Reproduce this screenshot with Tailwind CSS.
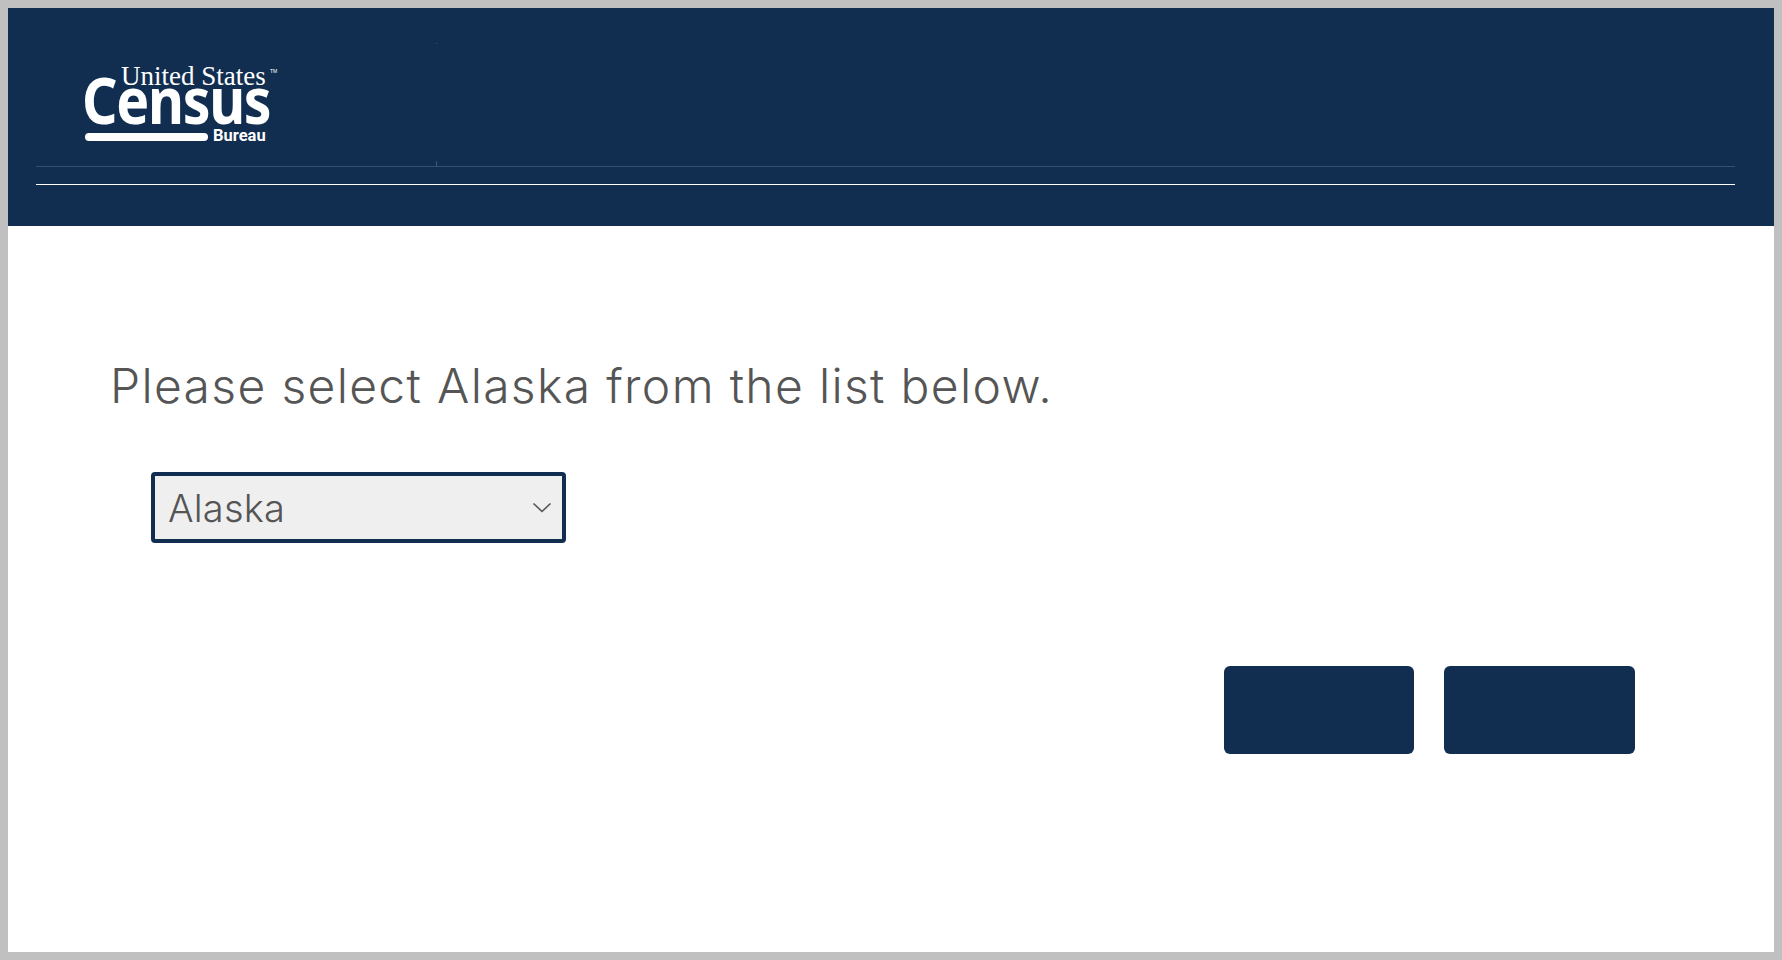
<!DOCTYPE html>
<html lang="en">
<head>
  <meta charset="UTF-8" />
  <meta name="viewport" content="width=device-width, initial-scale=1" />
  <title>Census</title>
  <script src="https://cdn.jsdelivr.net/npm/@tailwindcss/browser@4"></script>
</head>
<body class="bg-white font-['Inter',sans-serif]">
  <div class="h-[960px] border-8 border-[#c0c0c0] flex flex-col overflow-hidden">

    <header class="bg-[#112e51] h-[218px] shrink-0 pl-[28px] pr-[39px] relative">
      <!-- logo -->
      <div class="h-[158px] pl-[48px] pt-[54px]">
        <div class="w-[196px] h-[80px] relative text-white">
          <span class="absolute left-[37px] top-[0px] font-['Liberation_Serif',serif] text-[27px] leading-[28px] whitespace-nowrap">United States</span>
          <span class="absolute left-[186px] top-[6px] font-['Liberation_Sans',sans-serif] text-[5px] leading-[6px]">TM</span>
          <span class="absolute left-[-2px] top-[8px] origin-left scale-x-[0.865] font-['Noto_Sans',sans-serif] font-bold text-[64px] leading-[60px] tracking-[-1.5px] whitespace-nowrap">Census</span>
          <div class="absolute left-[1px] top-[71px] w-[123px] h-[8px] rounded-full bg-white"></div>
          <span class="absolute left-[129px] top-[65px] font-['Roboto',sans-serif] font-bold text-[16.5px] leading-[18px]">Bureau</span>
        </div>
      </div>
      <div class="h-px bg-[#35506f]"></div>
      <div class="h-px mt-[17px] bg-white"></div>
      <!-- small ticks on the divider -->
      <div class="absolute left-[428px] top-[35px] w-px h-[1px] bg-[#3d5775]"></div>
      <div class="absolute left-[428px] top-[153px] w-px h-[6px] bg-[#3d5775]"></div>
    </header>

    <main class="flex-1 pl-[102px] pt-[125px]">
      <h1 class="text-[48px] leading-[70px] font-light text-[#555] whitespace-nowrap tracking-[1.33px]">Please select Alaska from the list below.</h1>

      <div class="mt-[51px] ml-[41px] w-[415px] h-[71px] border-4 border-[#112e51] rounded-[4px] bg-[#efefef] flex items-center justify-between pl-[13px] pr-[10px]">
        <span class="text-[38px] font-light text-[#555] leading-none tracking-[0.2px]">Alaska</span>
        <svg class="w-[20px] h-[12px]" viewBox="0 0 20 12" fill="none" stroke="#555" stroke-width="1.6"><path d="M1.5 1.5 L10 9.5 L18.5 1.5" /></svg>
      </div>

      <div class="mt-[123px] ml-[1114px] flex gap-[30px]">
        <button class="w-[190px] h-[88px] bg-[#112e51] rounded-[6px]"></button>
        <button class="w-[191px] h-[88px] bg-[#112e51] rounded-[6px]"></button>
      </div>
    </main>
  </div>
</body>
</html>
